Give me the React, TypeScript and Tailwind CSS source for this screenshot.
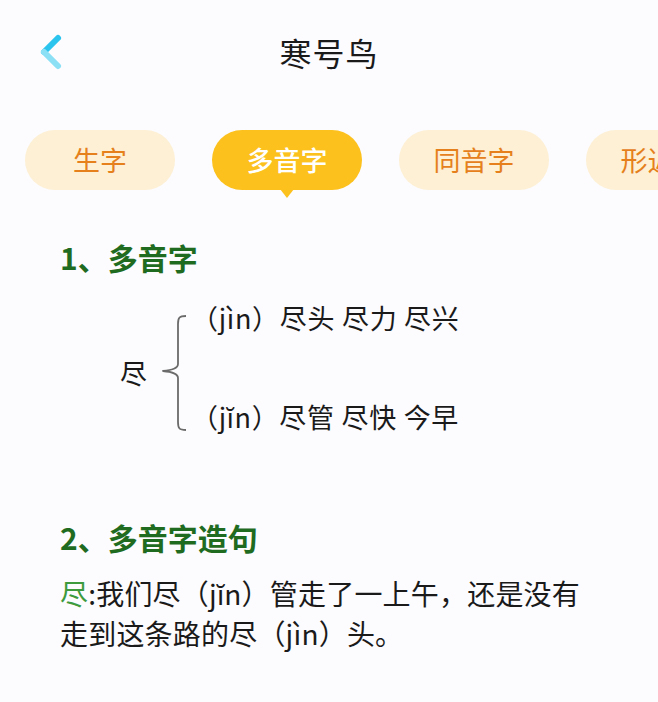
const cjk = { fontFamily: "'Noto Sans CJK SC', 'Noto Sans', sans-serif" };

const tabs = ["生字", "多音字", "同音字", "形近字"];

function Brace() {
  return (
    <svg width="30" height="118" viewBox="0 0 30 118" className="shrink-0">
      <path
        d="M27 2 C20 2 19 4 19 10 L19 50 C19 54 15 56 4 57 C15 58 19 60 19 64 L19 108 C19 114 20 116 27 116"
        fill="none"
        stroke="#6b6b6b"
        strokeWidth="1.8"
        strokeLinejoin="round"
      />
    </svg>
  );
}

export default function App() {
  return (
    <div className="w-[658px] h-[702px] overflow-hidden bg-[#fcfbfd] text-[#1a1a1a]" style={cjk}>
      <header className="relative h-[104px] flex items-center justify-center">
        <svg width="30" height="40" viewBox="0 0 30 40" className="absolute left-[36px] top-[32px]">
          <path d="M22 6 L8 20" stroke="#2ac4ee" strokeWidth="6" strokeLinecap="round" />
          <path d="M8 20 L22 34" stroke="#8ce0f6" strokeWidth="6" strokeLinecap="round" />
        </svg>
        <h1 className="text-[32px] leading-none font-normal tracking-[1px]">寒号鸟</h1>
      </header>

      <nav className="mt-[26px] pb-[10px] flex gap-[37px] pl-[25px] overflow-hidden">
        {tabs.map((t, i) => (
          <div key={t} className="relative shrink-0">
            <div
              className={`w-[150px] h-[60px] rounded-full flex items-center justify-center text-[27px] ${
                i === 1 ? "bg-[#fcc11c] text-white font-medium" : "bg-[#fdf0d4] text-[#e5801c]"
              }`}
            >
              {t}
            </div>
            {i === 1 && (
              <div className="absolute left-1/2 -translate-x-1/2 top-[59px] w-0 h-0 border-l-[7px] border-r-[7px] border-t-[9px] border-l-transparent border-r-transparent border-t-[#fcc11c]" />
            )}
          </div>
        ))}
      </nav>

      <section className="pl-[60px]">
        <h2 className="mt-[37px] text-[30px] leading-[40px] font-bold text-[#1f6b1f]">1、多音字</h2>

        <div className="mt-[23px] flex items-center pl-[60px]">
          <span className="text-[27px] leading-[36px] mt-[10px]">尽</span>
          <div className="ml-[12px] mt-[10px]">
            <Brace />
          </div>
          <div className="ml-[2px] flex flex-col gap-[63px] text-[27px] leading-[36px] tracking-[0.7px]">
            <div>（jìn）尽头 尽力 尽兴</div>
            <div>（jĭn）尽管 尽快 今早</div>
          </div>
        </div>

        <h2 className="mt-[82px] text-[30px] leading-[40px] font-bold text-[#1f6b1f]">2、多音字造句</h2>

        <p className="mt-[16px] w-[535px] text-[28px] leading-[40px] tracking-[0.2px]">
          <span className="text-[#3d9a3d]">尽</span>:我们尽（jĭn）管走了一上午，还是没有走到这条路的尽（jìn）头。
        </p>
      </section>
    </div>
  );
}
